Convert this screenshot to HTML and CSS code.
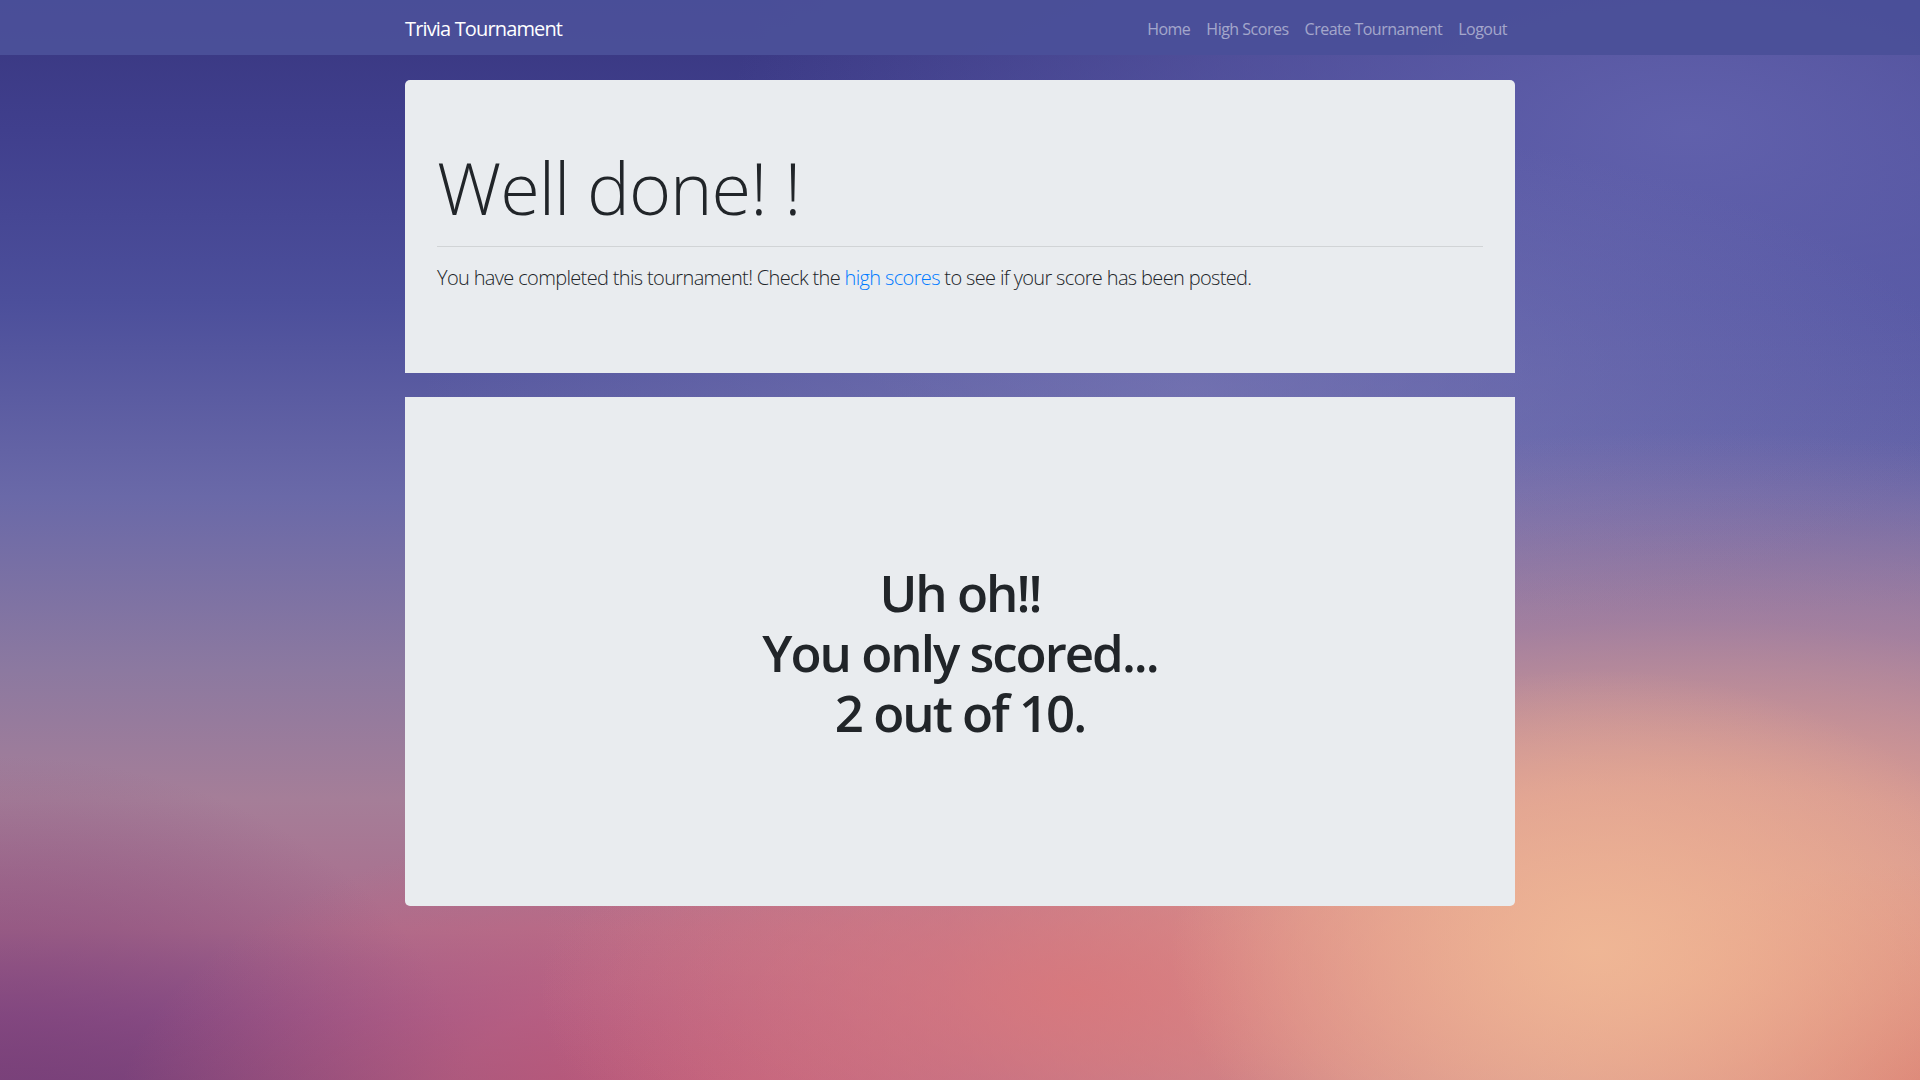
FILE: index.html
```html
<!DOCTYPE html>
<html lang="en">
<head>
<meta charset="utf-8">
<title>Trivia Tournament</title>
<link rel="stylesheet" href="styles.css">
</head>
<body>
<nav class="navbar">
  <div class="nav-inner">
    <a class="brand" href="#">Trivia Tournament</a>
    <ul class="nav-links">
      <li><a href="#">Home</a></li>
      <li><a href="#">High Scores</a></li>
      <li><a href="#">Create Tournament</a></li>
      <li><a href="#">Logout</a></li>
    </ul>
  </div>
</nav>
<main class="container">
  <section class="jumbotron">
    <h1 class="display">Well done! !</h1>
    <hr class="divider">
    <p class="lead">You have completed this tournament! Check the <a href="#" class="lead-link">high scores</a> to see if your score has been posted.</p>
  </section>
  <section class="result">
    <h1 class="result-title">Uh oh!!<br>You only scored...<br>2 out of 10.</h1>
  </section>
</main>
</body>
</html>
```
FILE: styles.css
```css
* { box-sizing: border-box; }
html, body { margin: 0; padding: 0; }
body {
  min-height: 1080px;
  font-family: "Open Sans", "Noto Sans", sans-serif;
  color: #212529;
  background-color: #6a69a8;
  background-image:
    radial-gradient(ellipse 22% 26% at 83% 88%, rgba(240,184,150,0.9) 0%, rgba(238,178,148,0.55) 50%, rgba(238,178,148,0) 100%),
    radial-gradient(ellipse 20% 20% at 100% 100%, rgba(222,128,112,0.75) 0%, rgba(222,128,112,0) 100%),
    radial-gradient(ellipse 28% 20% at 56% 92%, rgba(220,118,120,0.75) 0%, rgba(220,118,120,0.35) 55%, rgba(220,118,120,0) 100%),
    radial-gradient(ellipse 60% 50% at 88% 90%, rgba(233,168,140,1) 0%, rgba(225,160,145,0.85) 35%, rgba(200,140,155,0.45) 65%, rgba(180,130,160,0) 100%),
    radial-gradient(ellipse 34% 30% at 40% 104%, rgba(205,90,118,0.9) 0%, rgba(208,102,124,0.55) 50%, rgba(208,102,124,0) 100%),
    radial-gradient(ellipse 25% 35% at 0% 105%, rgba(118,62,120,0.85) 0%, rgba(118,62,120,0) 100%),
    radial-gradient(ellipse 40% 25% at 62% 36%, rgba(130,128,185,0.55) 0%, rgba(130,128,185,0) 100%),
    radial-gradient(ellipse 50% 45% at 88% 12%, rgba(100,100,175,0.9) 0%, rgba(100,100,175,0.5) 50%, rgba(100,100,175,0) 100%),
    linear-gradient(180deg, #38367f 0%, #403f8d 12%, #4c4f9b 28%, #6a69a8 46%, #8c79a0 62%, #a57e98 74%, #ab6c8c 86%, #94548a 94%, #83497f 100%);
  background-repeat: no-repeat;
  background-size: 1920px 1080px;
}

.navbar {
  height: 55px;
  background: rgba(74, 79, 153, 0.97);
  display: flex;
  align-items: center;
}
.nav-inner {
  width: 1110px;
  margin: 0 auto;
  display: flex;
  align-items: center;
  justify-content: space-between;
}
.brand {
  color: #fff;
  text-decoration: none;
  font-size: 20px;
  line-height: 30px;
  letter-spacing: -0.85px;
  padding-top: 2px;
}
.nav-links {
  list-style: none;
  margin: 0;
  padding: 0;
  display: flex;
}
.nav-links a {
  display: block;
  padding: 2px 8px 0;
  color: rgba(255, 255, 255, 0.5);
  text-decoration: none;
  font-size: 16px;
  line-height: 24px;
  letter-spacing: -0.5px;
}

.container {
  width: 1110px;
  margin: 0 auto;
  padding-top: 25px;
}

.jumbotron {
  background: #e9ecef;
  border-radius: 5px 5px 0 0;
  padding: 64px 32px;
}
.display {
  margin: 0 0 8px;
  font-size: 72px;
  font-weight: 300;
  line-height: 86px;
  letter-spacing: -1px;
}
.divider {
  margin: 16px 0;
  border: 0;
  border-top: 1px solid rgba(0, 0, 0, 0.1);
  height: 0;
}
.lead {
  margin: 0 0 16px;
  font-size: 20px;
  font-weight: 300;
  line-height: 30px;
  letter-spacing: -0.65px;
}
.lead-link { color: #007bff; text-decoration: none; }

.result {
  margin-top: 24px;
  background: #e9ecef;
  border-radius: 0 0 5px 5px;
  height: 509px;
  display: flex;
  align-items: center;
  justify-content: center;
}
.result-title {
  margin: 0;
  text-align: center;
  font-size: 51px;
  font-weight: 600;
  line-height: 60px;
  letter-spacing: -2px;
}
```
